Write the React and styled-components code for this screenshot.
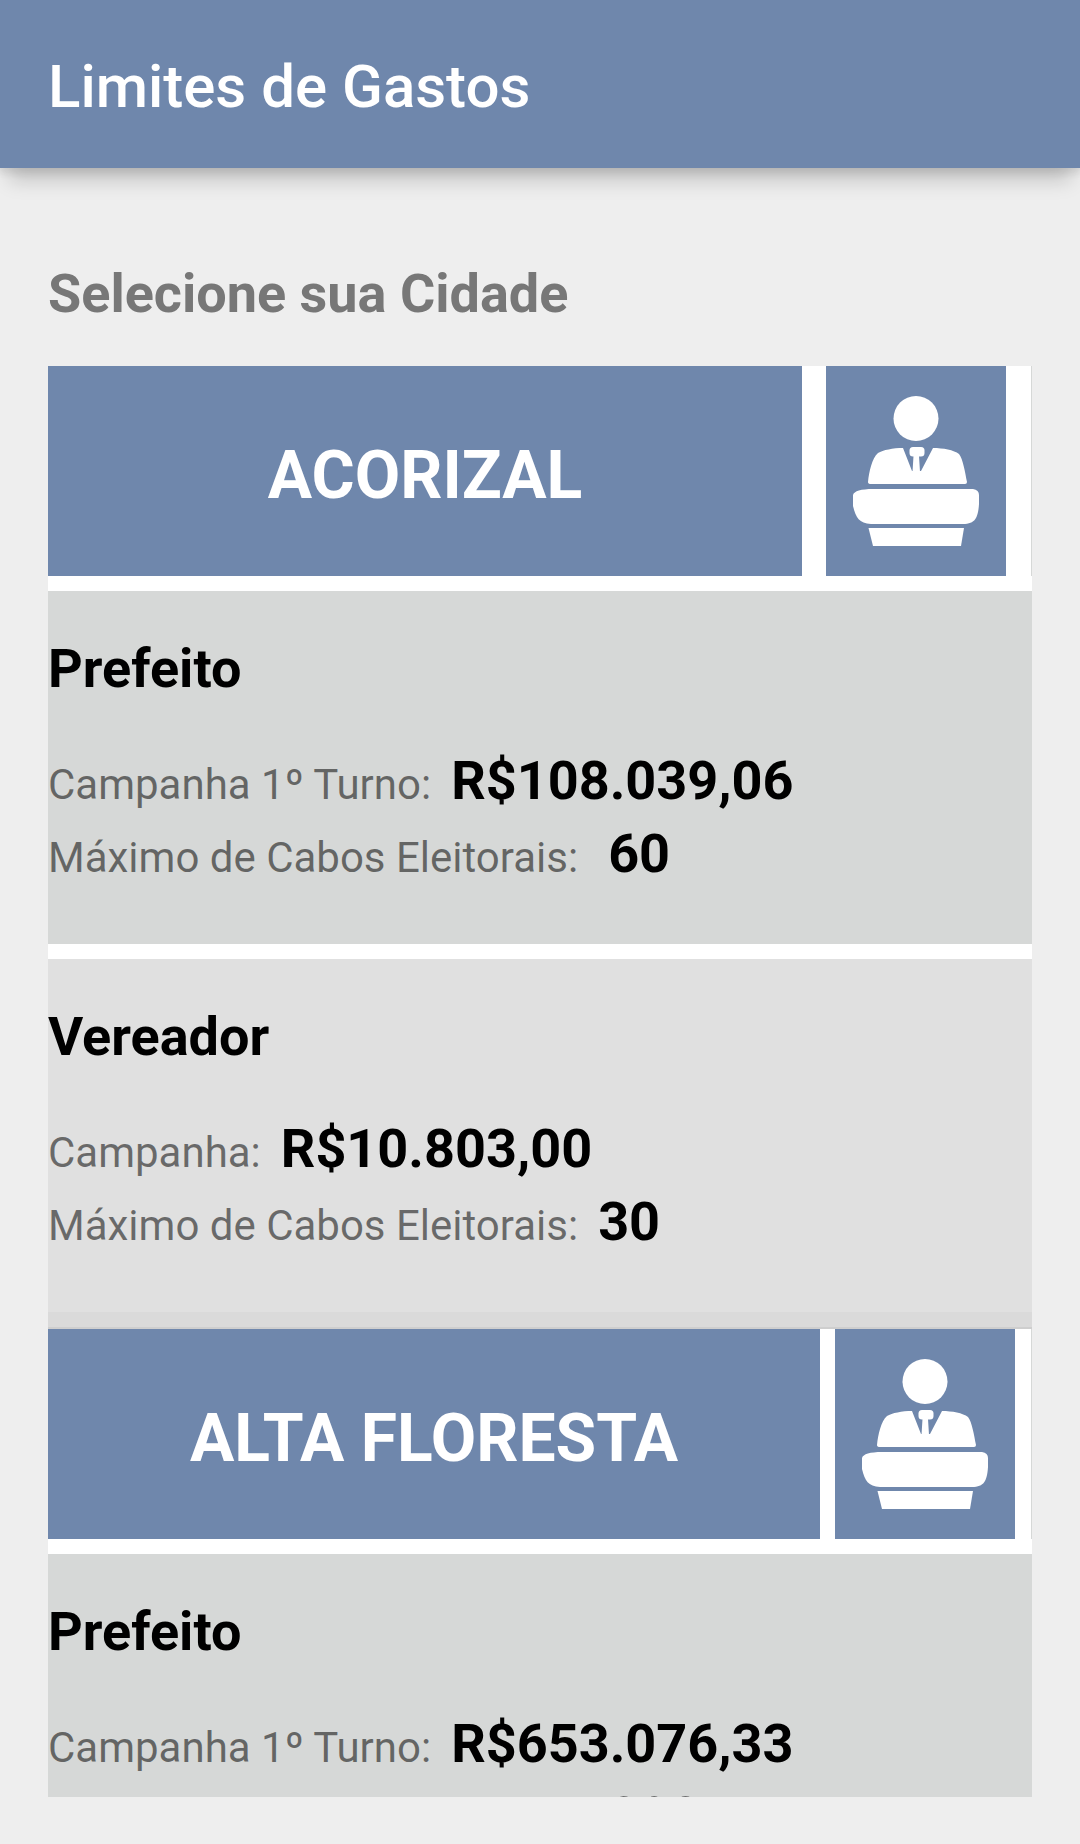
import React from "react";
import styled, { createGlobalStyle } from "styled-components";

const GlobalStyle = createGlobalStyle`
  * {
    box-sizing: border-box;
  }
  body {
    margin: 0;
    background: #eee;
    font-family: Roboto, "Noto Sans", sans-serif;
  }
`;

const Screen = styled.div`
  display: flex;
  flex-direction: column;
  height: 100vh;
`;

const AppBar = styled.header`
  flex: none;
  padding: 52px 48px 46px;
  background: #6f87ac;
  box-shadow:
    0 3px 8px 2px rgba(0, 0, 0, 0.1),
    0 22px 18px -9px rgba(0, 0, 0, 0.17);
`;

const AppTitle = styled.h1`
  margin: 0;
  color: #fff;
  font-size: 60px;
  font-weight: 500;
  line-height: 70px;
`;

const Content = styled.main`
  flex: 1;
  min-height: 0;
  display: flex;
  flex-direction: column;
  padding: 89px 48px 47px;
`;

const Prompt = styled.h2`
  flex: none;
  margin: 0 0 36px;
  color: #777;
  font-size: 54px;
  font-weight: 700;
  line-height: 73px;
`;

const CityList = styled.ul`
  flex: 1;
  min-height: 0;
  margin: 0;
  padding: 0;
  list-style: none;
  overflow-y: auto;
  scrollbar-width: none;
`;

const CityItem = styled.li`
  & + & {
    border-top: 2px solid #cecece;
  }
`;

const CityHeader = styled.div`
  display: flex;
  gap: ${({ $gap }) => $gap}px;
  padding-right: ${({ $gap }) => $gap + 1}px;
  height: 210px;
  background: #fff;
  border-right: 1px solid #d6d8d7;
`;

const CityButton = styled.button`
  flex: 1;
  border: 0;
  padding: 9px 0 0;
  background: #6f87ac;
  color: #fff;
  font: 700 66px/78px Roboto, "Noto Sans", sans-serif;
  text-transform: uppercase;
`;

const SpeakerButton = styled.button`
  flex: none;
  display: flex;
  align-items: center;
  justify-content: center;
  width: 180px;
  border: 0;
  padding: 0;
  background: #6f87ac;
`;

const Office = styled.section`
  padding: 41px 0 54px;
  background: ${({ $tone }) => $tone};
`;

const Band = styled.div`
  height: 15px;
  background: ${({ $tone }) => $tone};
`;

const OfficeName = styled.h3`
  margin: 0 0 39px;
  color: #000;
  font-size: 54px;
  font-weight: 700;
  line-height: 73px;
`;

const Limits = styled.dl`
  margin: 0;
`;

const Limit = styled.div`
  display: flex;
  align-items: baseline;
  gap: ${({ $wide }) => ($wide ? 30 : 20)}px;
  height: 73px;
  line-height: 73px;
`;

const LimitLabel = styled.dt`
  color: rgba(0, 0, 0, 0.54);
  font-size: 42px;
`;

const LimitValue = styled.dd`
  margin: 0;
  color: #000;
  font-size: 54px;
  font-weight: 700;
`;

function SpeakerIcon() {
  return (
    <svg width="126" height="150" viewBox="0 0 126 150" fill="#fff" aria-hidden="true">
      <circle cx="63" cy="22.5" r="22.5" />
      <path d="M50 52 C40 52 30 54 25 57 C19 62 16 76 15 86 Q15 88 18 88 H112 Q114 88 114 86 C112 76 110 63 106 58 C101 54 90 52 80 52 L68 75 H59 Z" />
      <rect x="56.5" y="51" width="15" height="9.5" rx="3.5" />
      <path d="M60.5 60 H66 L67 76 H59.5 Z" />
      <path d="M20 93 H120 Q126 94 126 99 V108 C125 122 122 128 110 128 H18 C6 127 3 122 0 110 V99 C1 95 8 93 20 93 Z" />
      <path d="M15.5 132 H111 L108 150 H20 Z" />
    </svg>
  );
}

const cities = [
  {
    name: "Acorizal",
    gap: 24,
    offices: [
      {
        name: "Prefeito",
        tone: "#d6d8d7",
        limits: [
          { label: "Campanha 1º Turno:", value: "R$108.039,06" },
          { label: "Máximo de Cabos Eleitorais:", value: "60", wide: true },
        ],
      },
      {
        name: "Vereador",
        tone: "#e0e0e0",
        limits: [
          { label: "Campanha:", value: "R$10.803,00" },
          { label: "Máximo de Cabos Eleitorais:", value: "30" },
        ],
      },
    ],
  },
  {
    name: "Alta Floresta",
    gap: 15,
    offices: [
      {
        name: "Prefeito",
        tone: "#d6d8d7",
        limits: [
          { label: "Campanha 1º Turno:", value: "R$653.076,33" },
          { label: "Máximo de Cabos Eleitorais:", value: "298", wide: true },
        ],
      },
    ],
  },
];

function City({ city }) {
  return (
    <CityItem>
      <CityHeader $gap={city.gap}>
        <CityButton type="button">{city.name}</CityButton>
        <SpeakerButton type="button" aria-label={`Candidatos de ${city.name}`}>
          <SpeakerIcon />
        </SpeakerButton>
      </CityHeader>
      {city.offices.map((office) => (
        <React.Fragment key={office.name}>
          <Band $tone="#fff" />
          <Office $tone={office.tone}>
            <OfficeName>{office.name}</OfficeName>
            <Limits>
              {office.limits.map((limit) => (
                <Limit key={limit.label} $wide={limit.wide}>
                  <LimitLabel>{limit.label}</LimitLabel>
                  <LimitValue>{limit.value}</LimitValue>
                </Limit>
              ))}
            </Limits>
          </Office>
        </React.Fragment>
      ))}
      <Band $tone="#dadada" />
    </CityItem>
  );
}

export default function App() {
  return (
    <Screen>
      <GlobalStyle />
      <AppBar>
        <AppTitle>Limites de Gastos</AppTitle>
      </AppBar>
      <Content>
        <Prompt>Selecione sua Cidade</Prompt>
        <CityList>
          {cities.map((city) => (
            <City key={city.name} city={city} />
          ))}
        </CityList>
      </Content>
    </Screen>
  );
}
